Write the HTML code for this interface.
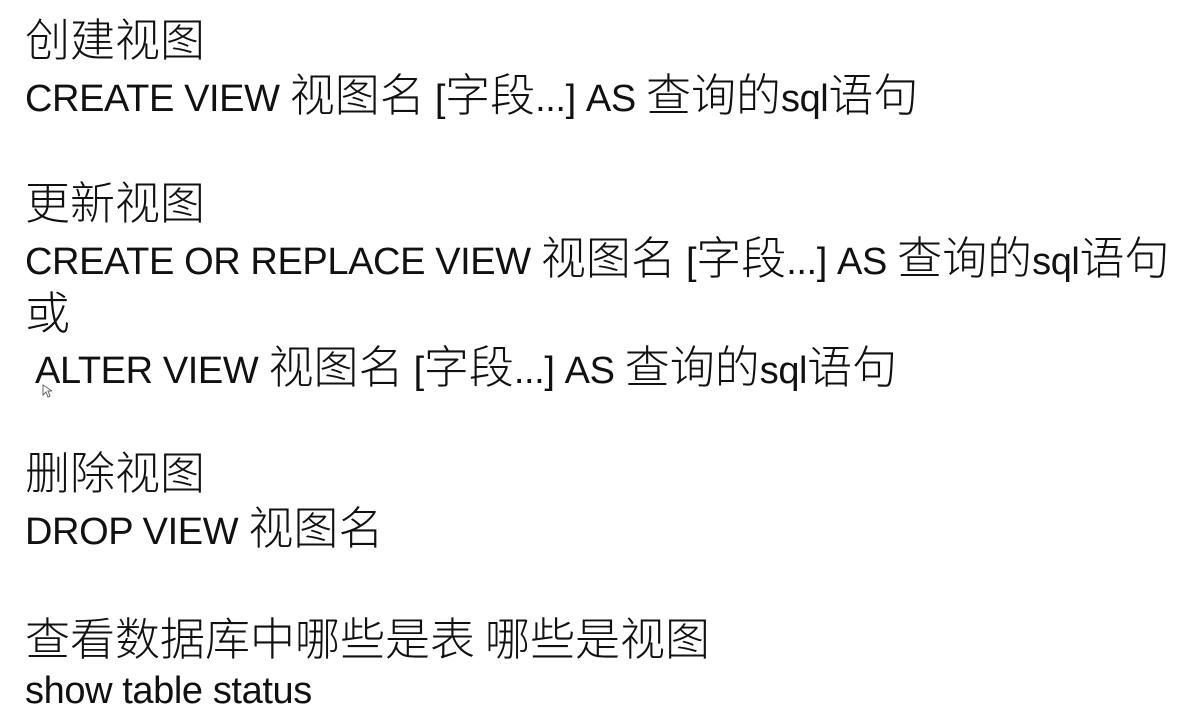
<!DOCTYPE html>
<html><head><meta charset="utf-8"><style>
html,body{margin:0;padding:0;background:#fff;width:1178px;height:715px;overflow:hidden}
.l{position:absolute;left:25px;white-space:nowrap;color:#111;font-family:"Liberation Sans",sans-serif;font-size:38px;letter-spacing:-0.4px;line-height:54px;height:54px}
.c{font-family:"Noto Sans CJK SC",sans-serif;font-size:45px;font-weight:300;letter-spacing:0}
</style></head><body>
<div class="l" style="top:10px"><span class="c">创建视图</span></div>
<div class="l" style="top:65px">CREATE VIEW <span class="c">视图名</span> [<span class="c">字段</span>...] AS <span class="c">查询的</span>sql<span class="c">语句</span></div>
<div class="l" style="top:173px"><span class="c">更新视图</span></div>
<div class="l" style="top:228px">CREATE OR REPLACE VIEW <span class="c">视图名</span> [<span class="c">字段</span>...] AS <span class="c">查询的</span>sql<span class="c">语句</span></div>
<div class="l" style="top:283px"><span class="c">或</span></div>
<div class="l" style="top:337px;left:35px">ALTER VIEW <span class="c">视图名</span> [<span class="c">字段</span>...] AS <span class="c">查询的</span>sql<span class="c">语句</span></div>
<svg style="position:absolute;left:42px;top:384px" width="10" height="14"><path d="M1 1 L1 11 L4 8 L6 13 L8 12 L6 7 L10 7 Z" fill="#fff" stroke="#666" stroke-width="1"/></svg>
<div class="l" style="top:443px"><span class="c">删除视图</span></div>
<div class="l" style="top:498px">DROP VIEW <span class="c">视图名</span></div>
<div class="l" style="top:609px"><span class="c">查看数据库中哪些是表 哪些是视图</span></div>
<div class="l" style="top:664px">show table status</div>
</body></html>
